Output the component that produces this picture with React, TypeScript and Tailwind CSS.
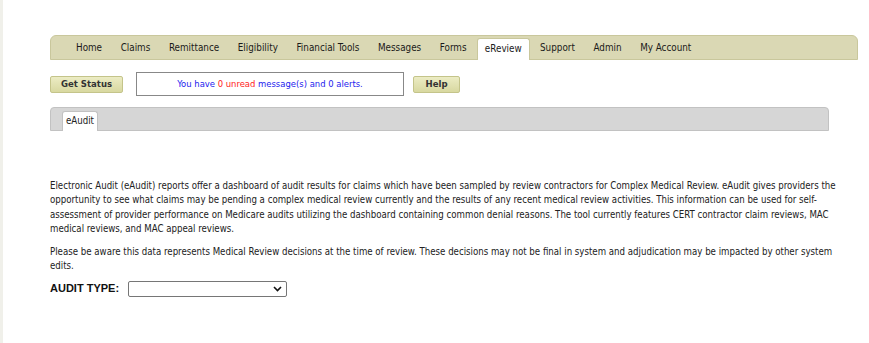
const NAV = ["Home", "Claims", "Remittance", "Eligibility", "Financial Tools", "Messages", "Forms", "eReview", "Support", "Admin", "My Account"];

const tahoma = { fontFamily: '"DejaVu Sans Condensed", "DejaVu Sans", sans-serif' };

function KhakiButton({ label, w }: { label: string; w: string }) {
  return (
    <button
      className={`h-[17px] ${w} rounded-[2px] border border-[#c4c48a] bg-gradient-to-b from-[#ececc4] to-[#d8d8a0] text-[9.5px] font-bold text-[#333]`}
    >
      {label}
    </button>
  );
}

export default function App() {
  return (
    <div className="flex min-h-[343px] w-[869px] bg-white text-[9.6px] text-[#222]" style={tahoma}>
      <div className="w-[3px] shrink-0 bg-[#f0f0ea]" />
      <div className="ml-[47px] w-[808px]">
        {/* top nav */}
        <div className="mt-[35px] flex h-[25px] items-end rounded-t-[6px] border border-[#c9c79c] bg-[#dad8b4] pl-[25px] text-[9.8px] text-[#1a1a1a]">
          {NAV.map((n) =>
            n === "eReview" ? (
              <div key={n} className="mx-[1px] mb-[-1px] flex h-[22px] items-center rounded-t-[3px] border border-b-0 border-[#c9c79c] bg-white px-[7px]">
                {n}
              </div>
            ) : (
              <div key={n} className="flex h-[22px] items-center px-[9.3px] first:pl-0">
                {n}
              </div>
            )
          )}
        </div>

        {/* status row */}
        <div className="mt-[12px] flex items-center">
          <KhakiButton label="Get Status" w="w-[73px]" />
          <div className="ml-[13px] flex h-[24px] w-[268px] items-center justify-center border border-[#888] text-[9.4px] text-[#2222ee]">
            You have&nbsp;<span className="text-[#ff2222]">0 unread</span>&nbsp;message(s) and 0 alerts.
          </div>
          <div className="ml-[9px]">
            <KhakiButton label="Help" w="w-[47px]" />
          </div>
        </div>

        {/* tabs */}
        <div className="mt-[11px] flex h-[24px] w-[779px] items-end rounded-t-[4px] border border-[#c2c2c2] bg-[#d6d6d6] pl-[11px]">
          <div className="mb-[-1px] flex h-[20px] items-center rounded-t-[3px] border border-b-0 border-[#c2c2c2] bg-white px-[3px]">
            eAudit
          </div>
        </div>

        {/* body */}
        <div className="mt-[48px] w-[798px] leading-[14.4px]">
          <p>
            Electronic Audit (eAudit) reports offer a dashboard of audit results for claims which have been sampled by review contractors for Complex Medical Review. eAudit gives providers the opportunity to see what claims may be pending a complex medical review currently and the results of any recent medical review activities. This information can be used for self-assessment of provider performance on Medicare audits utilizing the dashboard containing common denial reasons. The tool currently features CERT contractor claim reviews, MAC medical reviews, and MAC appeal reviews.
          </p>
          <p className="mt-[8px]">
            Please be aware this data represents Medical Review decisions at the time of review. These decisions may not be final in system and adjudication may be impacted by other system edits.
          </p>
        </div>

        <div className="mt-[7px] flex items-center gap-[9px]">
          <span className="font-['Liberation_Sans',Arial,sans-serif] text-[11px] font-bold text-[#111]">AUDIT TYPE:</span>
          <div className="flex h-[16px] w-[159px] items-center justify-end rounded-[2px] border border-[#767676] pr-[4px]">
            <svg width="9" height="6" viewBox="0 0 9 6" fill="none">
              <path d="M1 1l3.5 3.5L8 1" stroke="#111" strokeWidth="1.6" />
            </svg>
          </div>
        </div>
      </div>
    </div>
  );
}
